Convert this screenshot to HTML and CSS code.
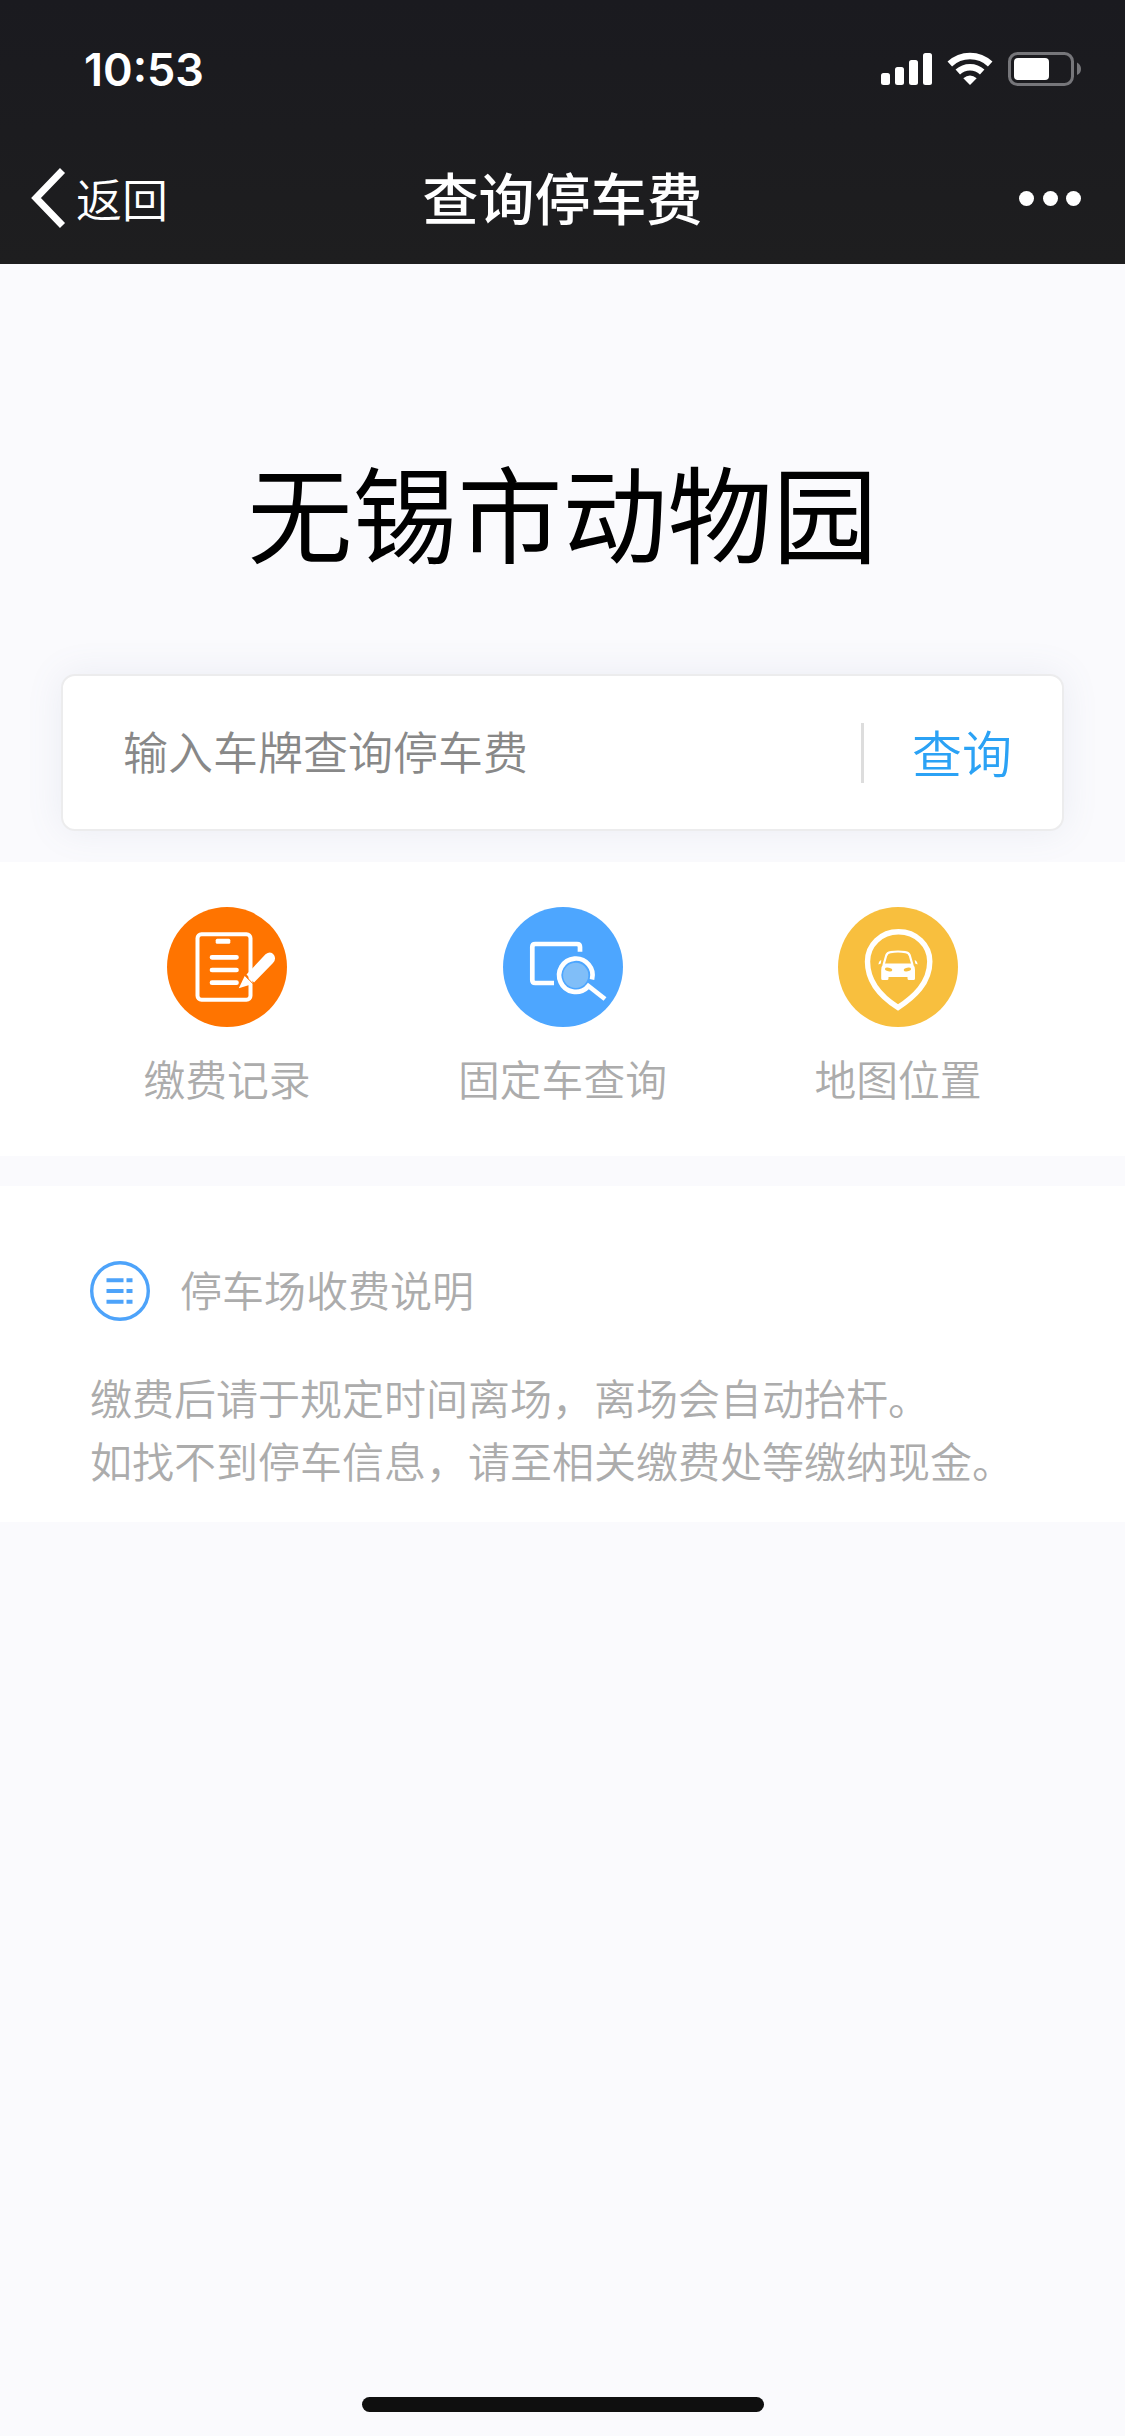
FILE: index.html
```html
<!DOCTYPE html>
<html lang="zh-CN">
<head>
<meta charset="utf-8">
<title>查询停车费</title>
<link rel="stylesheet" href="styles.css">
</head>
<body>
<header class="header">
  <div class="status">
    <span class="time">10:53</span>
    <svg class="status-icons" width="204" height="40" viewBox="0 0 204 40">
      <g fill="#fff">
        <rect x="3" y="24" width="9" height="12" rx="2.5"/>
        <rect x="17" y="18" width="9" height="18" rx="2.5"/>
        <rect x="31" y="11" width="9" height="25" rx="2.5"/>
        <rect x="45" y="4" width="9" height="32" rx="2.5"/>
        <path d="M92 36 L85.3 29.2 Q92 23.8 98.7 29.2 Z"/>
      </g>
      <g fill="none" stroke="#fff" stroke-width="6.6">
        <path d="M71.8 15 A29.5 29.5 0 0 1 112.2 15"/>
        <path d="M79.8 23 A18 18 0 0 1 104.2 23"/>
      </g>
      <rect x="131.5" y="4.5" width="63" height="31" rx="8" fill="none" stroke="#76767a" stroke-width="3"/>
      <rect x="136" y="9" width="35" height="22" rx="4" fill="#fff"/>
      <path d="M199 13.5 Q203 15.5 203 20 Q203 24.500 199 26 Z" fill="#76767a"/>
    </svg>
  </div>
  <nav class="nav">
    <a class="back">
      <svg width="36" height="60" viewBox="0 0 36 60"><path d="M31.500 2.500 L5 30 L31.500 57.500" fill="none" stroke="#fff" stroke-width="7"/></svg>
      <span>返回</span>
    </a>
    <h1 class="nav-title">查询停车费</h1>
    <div class="more"><i></i><i></i><i></i></div>
  </nav>
</header>
<main>
  <section class="hero">
    <h2 class="place">无锡市动物园</h2>
    <div class="search">
      <span class="placeholder">输入车牌查询停车费</span>
      <span class="query">查询</span>
    </div>
  </section>
  <section class="menu">
    <div class="item">
      <svg width="120" height="120" viewBox="0 0 120 120">
        <circle cx="60" cy="60" r="60" fill="#ff7400"/>
        <rect x="30.500" y="27.200" width="53" height="65.600" rx="4" fill="none" stroke="#fff" stroke-width="4"/>
        <rect x="48.700" y="31.700" width="14.600" height="5" rx="1.500" fill="#fff"/>
        <path d="M45 50.300H69.500M45 63H69.500M45 75.700H69.500" stroke="#fff" stroke-width="4.700" stroke-linecap="round"/>
        <path d="M79.500 67.500L98.500 47.300Q103.500 43.500 107 48Q109.500 52.500 106 56L87 75.500Z" fill="#fff"/>
        <path d="M71.800 81.300L77.800 68.800L85.500 77Z" fill="#fff"/>
        <path d="M78 68.500L86 76.800" stroke="#ff7400" stroke-width="1"/>
      </svg>
      <span>缴费记录</span>
    </div>
    <div class="item">
      <svg width="120" height="120" viewBox="0 0 120 120">
        <circle cx="60" cy="60" r="60" fill="#4da6ff"/>
        <g fill="none" stroke="#fff" stroke-width="4.700">
          <path d="M77 44.700V40Q77 37 74 37H32.300Q29.300 37 29.300 40V73Q29.300 76 32.300 76H51"/>
          <path d="M89 72.500A16.700 16.700 0 1 0 84.500 80.200"/>
          <path d="M83.500 77.500L102 92"/>
        </g>
        <circle cx="72.700" cy="68.300" r="12.600" fill="#80bef8"/>
      </svg>
      <span>固定车查询</span>
    </div>
    <div class="item">
      <svg width="120" height="120" viewBox="0 0 120 120">
        <circle cx="60" cy="60" r="60" fill="#f8bf3e"/>
        <path d="M60.500 24.800C78 24.800 91.800 38 91.800 54.500C91.800 76 76 90 60 100.500C45 91 29.500 76 29.500 54.500C29.500 38 43 24.800 60.500 24.800Z" fill="none" stroke="#fff" stroke-width="5.400"/>
        <path d="M45.500 58L48.200 48.500Q49.300 45.600 52.500 45.200Q60 43.800 67.500 45.200Q70.700 45.600 71.800 48.500L74.500 58" fill="none" stroke="#fff" stroke-width="2.200"/>
        <path d="M45.500 56.500H74.500Q77 59.500 77 63V71.500Q77 73 75.500 73H71Q69.500 73 69.500 71.500V70H50.500V71.500Q50.500 73 49 73H44.700Q43.200 73 43.200 71.500V63Q43.200 59.500 45.500 56.500Z" fill="#fff"/>
        <ellipse cx="50.600" cy="62.500" rx="3.700" ry="1.900" transform="rotate(10 50.600 62.500)" fill="#f8bf3e"/>
        <ellipse cx="69.400" cy="62.500" rx="3.700" ry="1.900" transform="rotate(-10 69.400 62.500)" fill="#f8bf3e"/>
        <path d="M43.300 53Q40.500 54 40.500 57.500L42.800 56.500ZM76.700 53Q79.500 54 79.500 57.500L77.200 56.500Z" fill="#fff"/>
      </svg>
      <span>地图位置</span>
    </div>
  </section>
  <section class="notes">
    <div class="notes-head">
      <svg width="60" height="60" viewBox="0 0 60 60" fill="none" stroke="#4da3fa">
        <circle cx="30" cy="30" r="28.300" stroke-width="3.400"/>
        <path d="M16.500 19.300H33.500M36.500 19.300H42.500M16.500 30H33.500M36.500 30H42.500M16.500 40.700H33.500M36.500 40.700H42.500" stroke-width="4"/>
      </svg>
      <span>停车场收费说明</span>
    </div>
    <p>缴费后请于规定时间离场，离场会自动抬杆。<br>如找不到停车信息，请至相关缴费处等缴纳现金。</p>
  </section>
</main>
<div class="home-bar"></div>
</body>
</html>
```
FILE: styles.css
```css
* { box-sizing: border-box; margin: 0; padding: 0; }

body {
  display: flex;
  flex-direction: column;
  height: 2436px;
  background: #fafafd;
  font-family: "Noto Sans CJK SC", sans-serif;
  font-weight: 350;
}

svg { display: block; flex: none; }

.header {
  height: 264px;
  background: linear-gradient(#1a1a1f, #1c1c1f 50%, #1e1e1f);
  color: #fff;
}

.status {
  display: flex;
  justify-content: space-between;
  align-items: flex-start;
  height: 132px;
  padding: 49px 43px 0 84px;
}

.time {
  padding-top: 1px;
  font: 600 45px/40px "Inter", sans-serif;
}

.nav {
  display: grid;
  grid-template-columns: 1fr auto 1fr;
  align-items: center;
  height: 132px;
  padding: 0 44px 0 31px;
}

.back { display: flex; align-items: center; gap: 9px; font-size: 46px; line-height: 60px; }
.back span { padding-bottom: 2px; }

.nav-title {
  padding: 0 0 5px 13px;
  font-size: 56px;
  font-weight: 500;
  line-height: 80px;
}

.more { display: flex; justify-content: flex-end; gap: 8.500px; }
.more i { width: 15px; height: 15px; border-radius: 50%; background: #fff; }

.hero {
  height: 598px;
  padding: 168px 61px 0;
  overflow: hidden;
}

.place {
  height: 155px;
  margin-bottom: 87px;
  color: #000;
  font-size: 105px;
  font-weight: 400;
  line-height: 155px;
  text-align: center;
}

.search {
  display: flex;
  align-items: center;
  justify-content: space-between;
  height: 157px;
  padding: 0 50px 0 60px;
  background: #fff;
  border: 2px solid #ececed;
  border-radius: 14px;
  box-shadow: 0 0 36px rgba(110, 130, 160, .11);
}

.placeholder { padding-bottom: 3px; color: #888; font-size: 45px; line-height: 60px; }

.query {
  padding-left: 48px;
  border-left: 3px solid #ddd;
  color: #2ba2f5;
  font-size: 50px;
  line-height: 56px;
  padding-bottom: 4px;
}

.menu {
  display: grid;
  grid-template-columns: repeat(3, 335.500px);
  justify-content: center;
  height: 294px;
  padding-top: 45px;
  background: #fff;
}

.item {
  display: flex;
  flex-direction: column;
  align-items: center;
  gap: 21px;
  color: #acacac;
  font-size: 41.800px;
  line-height: 60px;
}

.notes {
  height: 336px;
  margin-top: 30px;
  padding: 75px 90px 0;
  background: #fff;
  color: #acacac;
  font-size: 42px;
  line-height: 63px;
}

.notes-head { display: flex; align-items: center; gap: 30px; height: 60px; margin-bottom: 44px; }
.notes-head span { padding-bottom: 6px; }

.notes p { white-space: nowrap; }

.home-bar {
  width: 402px;
  height: 15px;
  margin: auto auto 24px;
  border-radius: 8px;
  background: #0f0f0f;
}
```
